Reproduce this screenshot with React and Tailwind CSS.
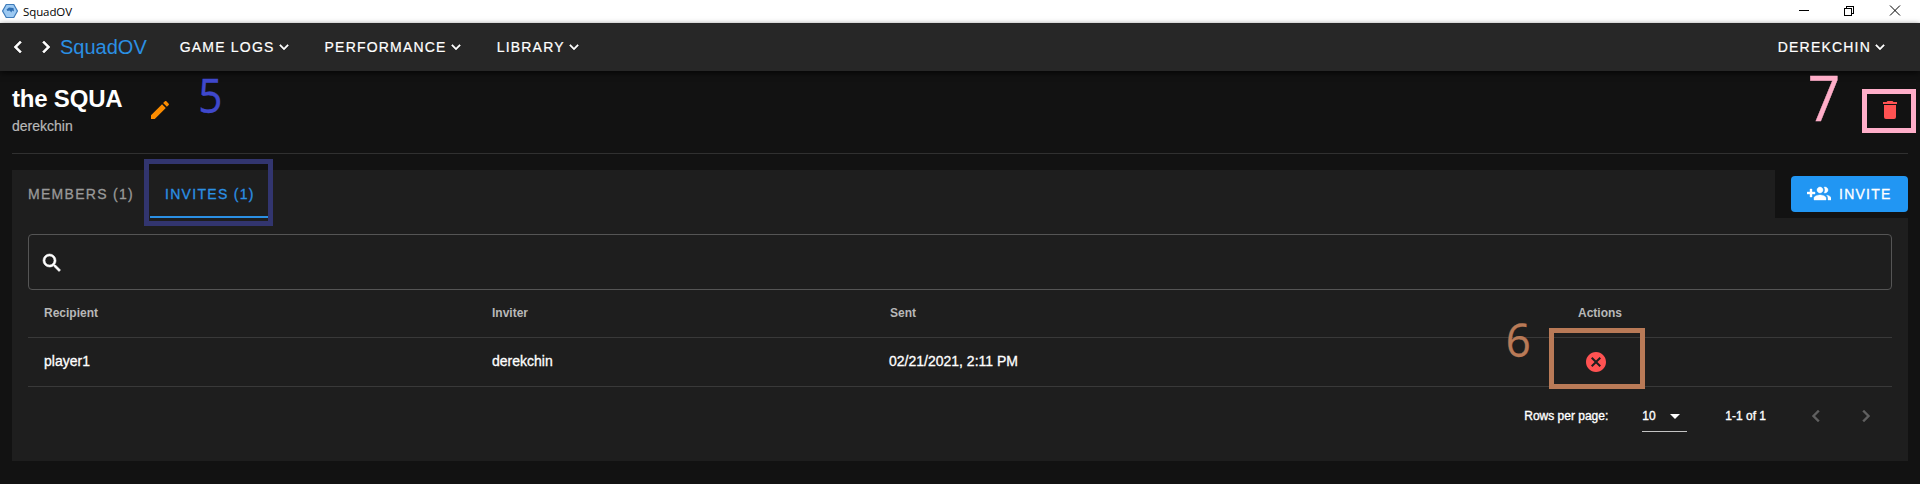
import React from "react";

const ICONS = {
  left: "M15.41,16.58L10.83,12L15.41,7.41L14,6L8,12L14,18L15.41,16.58Z",
  right: "M8.59,16.58L13.17,12L8.59,7.41L10,6L16,12L10,18L8.59,16.58Z",
  down: "M7.41,8.58L12,13.17L16.59,8.58L18,10L12,16L6,10L7.41,8.58Z",
  pencil:
    "M20.71,7.04C21.1,6.65 21.1,6 20.71,5.63L18.37,3.29C18,2.9 17.35,2.9 16.96,3.29L15.12,5.12L18.87,8.87M3,17.25V21H6.75L17.81,9.93L14.06,6.18L3,17.25Z",
  trash:
    "M19,4H15.5L14.5,3H9.5L8.5,4H5V6H19M6,19A2,2 0 0,0 8,21H16A2,2 0 0,0 18,19V7H6V19Z",
  invite:
    "M13 13C11 13 7 14 7 16V18H19V16C19 14 15 13 13 13M19.62 13.16C20.45 13.88 21 14.82 21 16V18H24V16C24 14.46 21.63 13.5 19.62 13.16M13 11C14.66 11 16 9.66 16 8S14.66 5 13 5 10 6.34 10 8 11.34 11 13 11M18 11C19.66 11 21 9.66 21 8S19.66 5 18 5C17.68 5 17.37 5.05 17.08 5.14C17.65 5.95 18 6.94 18 8C18 9.06 17.65 10.04 17.08 10.86C17.37 10.95 17.68 11 18 11M8 10H5V7H3V10H0V12H3V15H5V12H8V10Z",
  search:
    "M9.5,3A6.5,6.5 0 0,1 16,9.5C16,11.11 15.41,12.59 14.44,13.73L14.71,14H15.5L20.5,19L19,20.5L14,15.5V14.71L13.73,14.44C12.59,15.41 11.11,16 9.5,16A6.5,6.5 0 0,1 3,9.5A6.5,6.5 0 0,1 9.5,3M9.5,5C7,5 5,7 5,9.5C5,12 7,14 9.5,14C12,14 14,12 14,9.5C14,7 12,5 9.5,5Z",
  cancel:
    "M12,2C17.53,2 22,6.47 22,12C22,17.53 17.53,22 12,22C6.47,22 2,17.53 2,12C2,6.47 6.47,2 12,2M15.59,7L12,10.59L8.41,7L7,8.41L10.59,12L7,15.59L8.41,17L12,13.41L15.59,17L17,15.59L13.41,12L17,8.41L15.59,7Z",
  caret: "M7,10L12,15L17,10H7Z",
};

function Icon({ name, className = "size-6" }) {
  return (
    <svg viewBox="0 0 24 24" fill="currentColor" className={`shrink-0 ${className}`}>
      <path d={ICONS[name]} />
    </svg>
  );
}

function TitleBar() {
  return (
    <div className="flex h-[23px] items-center bg-white pl-0.5 pr-[19px] text-black">
      <svg viewBox="0 0 16 16" className="-mt-0.5 size-4">
        <path d="M4.200 1.500h7.600L15.400 8l-3.600 6.500H4.200L.6 8z" fill="#9cc9f2" stroke="#3f7cba" strokeWidth="1.200" />
        <path d="M4.500 6.500l2.500-2 4.500.500.500 3.500-2-1-.5 2-2-2-2 .5z" fill="#2f6fb3" />
      </svg>
      <span className="ml-[5px] font-['Open_Sans',sans-serif] text-[11.5px] leading-none tracking-[-0.1px]">SquadOV</span>
      <svg viewBox="0 0 102 12" fill="none" stroke="#000" className="-mt-[3px] ml-auto h-3 w-[102px]" shapeRendering="crispEdges">
        <path d="M0 6.500h10" />
        <path d="M45.500 4.500h7v7h-7zM47.500 4v-2h7v7h-2" />
        <path d="M91 1.500l10 10M101 1.500l-10 10" shapeRendering="auto" />
      </svg>
    </div>
  );
}

function MenuButton({ children }) {
  return (
    <button className="flex h-9 items-center px-4 text-sm font-medium tracking-[1.2px] [-webkit-text-stroke:0.2px]">
      {children}
      <Icon name="down" className="size-[18px] stroke-current stroke-[0.6]" />
    </button>
  );
}

function AppBar() {
  return (
    <header className="relative flex h-12 items-center bg-[#272727] pl-1.5 pr-[15px] text-white shadow-[0_2px_6px_rgba(0,0,0,0.7)]">
      <Icon name="left" className="size-6 stroke-current stroke-[0.6]" />
      <Icon name="right" className="ml-1 size-6 stroke-current stroke-[0.6]" />
      <span className="ml-0.5 text-xl text-[#2b90e4]">SquadOV</span>
      <nav className="ml-[17px] flex">
        <MenuButton>GAME LOGS</MenuButton>
        <MenuButton>PERFORMANCE</MenuButton>
        <MenuButton>LIBRARY</MenuButton>
      </nav>
      <div className="ml-auto">
        <MenuButton>DEREKCHIN</MenuButton>
      </div>
    </header>
  );
}

const COLS = "grid grid-cols-[448px_398px_688px_1fr] items-center border-b border-[#393939] px-4";

export default function App() {
  return (
    <div className="relative flex h-[484px] w-[1920px] flex-col overflow-hidden bg-[#121212] font-['Liberation_Sans',Arial,sans-serif] text-white">
      <TitleBar />
      <AppBar />

      <section className="mx-3 flex h-[83px] items-start border-b border-[#303030]">
        <div className="w-[135px] pt-3">
          <h1 className="whitespace-nowrap text-2xl font-bold leading-8 tracking-[-0.2px]">the SQUA</h1>
          <p className="pt-px text-sm leading-5 text-[#b8b8b8] [-webkit-text-stroke:0.2px]">derekchin</p>
        </div>
        <Icon name="pencil" className="ml-px mt-[27px] size-6 text-[#fb8c00]" />
        <Icon name="trash" className="ml-auto mr-1.5 mt-[27px] size-6 text-[#ff5252]" />
      </section>

      <main className="mx-3 mt-4">
        <div className="flex h-12">
          <div className="flex w-[1763px] bg-[#1e1e1e] text-sm font-medium tracking-[1.3px] [-webkit-text-stroke:0.3px]">
            <div className="flex w-[138px] items-center pl-4 text-[#999999]">MEMBERS (1)</div>
            <div className="flex w-[120px] items-center border-b-2 border-[#2b90e4] pl-[15px] pt-0.5 text-[#2b90e4]">INVITES (1)</div>
          </div>
          <button className="ml-4 mt-1.5 flex h-9 w-[117px] items-center rounded bg-[#2196f3] pl-4 text-sm font-medium tracking-[1.25px] [-webkit-text-stroke:0.3px]">
            <Icon name="invite" className="size-6 stroke-current stroke-[0.4]" />
            <span className="ml-2">INVITE</span>
          </button>
        </div>

        <div className="h-[243px] bg-[#1e1e1e] px-4 pt-4">
          <div className="flex h-14 items-center rounded border border-[#555555] pl-[11px] pt-px">
            <Icon name="search" className="size-6 stroke-current stroke-[0.6]" />
          </div>
          <div className={`${COLS} h-12 pb-px text-xs font-bold text-[#b8b8b8]`}>
            <span>Recipient</span>
            <span>Inviter</span>
            <span>Sent</span>
            <span>Actions</span>
          </div>
          <div className={`${COLS} h-[49px] text-sm [-webkit-text-stroke:0.3px]`}>
            <span className="pb-0.5">player1</span>
            <span className="pb-0.5">derekchin</span>
            <span className="-ml-px pb-0.5">02/21/2021, 2:11 PM</span>
            <Icon name="cancel" className="ml-1.5 size-6 text-[#ff5252]" />
          </div>
          <div className="flex h-[58px] items-center justify-end pr-[14px] text-xs [-webkit-text-stroke:0.35px]">
            <span>Rows per page:</span>
            <div className="ml-[34px] flex h-8 w-[45px] items-center border-b border-[#c4c4c4]">
              <span>10</span>
              <Icon name="caret" className="ml-[7px] size-6" />
            </div>
            <span className="ml-[38px]">1-1 of 1</span>
            <Icon name="left" className="ml-[38px] size-6 stroke-current stroke-[0.4] text-[#606060]" />
            <Icon name="right" className="ml-[26px] size-6 stroke-current stroke-[0.4] text-[#606060]" />
          </div>
        </div>
      </main>

      <div className="absolute left-[144px] top-[159px] h-[67px] w-[129px] border-[5px] border-[#32356f]" />
      <div className="absolute left-[1862px] top-[89px] h-11 w-[54px] border-[5px] border-[#ffaec9]" />
      <div className="absolute left-[1549px] top-[328px] h-[61px] w-24 border-[5px] border-[#b97a57]" />
      <span className="absolute left-[197px] top-[70px] origin-center scale-x-90 font-['Open_Sans',sans-serif] text-[47px] leading-[50px] text-[#3f48cc] [-webkit-text-stroke:0.4px]">5</span>
      <span className="absolute left-[1806px] top-[65px] origin-center scale-x-90 font-['Open_Sans',sans-serif] text-[63px] leading-[64px] text-[#ffaec9] [-webkit-text-stroke:0.4px]">7</span>
      <span className="absolute left-[1505px] top-[314px] origin-center scale-x-95 font-['Open_Sans',sans-serif] text-[46px] leading-[50px] text-[#b97a57] [-webkit-text-stroke:0.3px]">6</span>
    </div>
  );
}
